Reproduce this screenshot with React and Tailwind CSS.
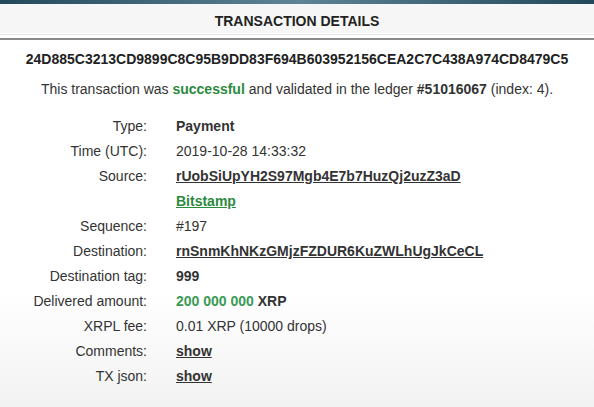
export default function App() {
  const rows = [
    { label: "Type:", value: <span className="font-bold">Payment</span> },
    { label: "Time (UTC):", value: <span>2019-10-28 14:33:32</span> },
    { label: "Source:", value: <a className="font-bold underline text-[#333]">rUobSiUpYH2S97Mgb4E7b7HuzQj2uzZ3aD</a> },
    { label: "", value: <a className="font-bold underline text-[#2b8a3e]">Bitstamp</a> },
    { label: "Sequence:", value: <span>#197</span> },
    { label: "Destination:", value: <a className="font-bold underline text-[#333]">rnSnmKhNKzGMjzFZDUR6KuZWLhUgJkCeCL</a> },
    { label: "Destination tag:", value: <span className="font-bold">999</span> },
    { label: "Delivered amount:", value: <span className="font-bold"><span className="text-[#3a9a55]">200 000 000</span> XRP</span> },
    { label: "XRPL fee:", value: <span>0.01 XRP (10000 drops)</span> },
    { label: "Comments:", value: <a className="font-bold underline text-[#333]">show</a> },
    { label: "TX json:", value: <a className="font-bold underline text-[#333]">show</a> },
  ];
  return (
    <div className="w-[594px] h-[407px] overflow-hidden text-[14px] text-[#333] bg-gradient-to-b from-white from-[72%] to-[#f2f2f2]" style={{ fontFamily: '"Liberation Sans", Arial, sans-serif' }}>
      <div className="h-[4px] bg-gradient-to-r from-[#23495a] via-[#5d8494] to-[#22495a]" />
      <div className="h-[29px] pt-[5px] bg-[#f6f6f6] flex items-center justify-center font-bold text-[14px] text-[#222]">
        TRANSACTION DETAILS
      </div>
      <div className="h-[1px] bg-white" />
      <div className="h-[1px] bg-[#e6e6e6]" />
      <div className="h-[3px] bg-white" />
      <div className="h-[2px] bg-[#8a8a8a]" />
      <div className="pt-[11px] text-center font-bold text-[#222] leading-[16px] text-[14px]">
        24D885C3213CD9899C8C95B9DD83F694B603952156CEA2C7C438A974CD8479C5
      </div>
      <div className="pt-[14px] text-center leading-[16px]">
        This transaction was <span className="font-bold text-[#2b8a3e]">successful</span> and validated in the ledger <span className="font-bold">#51016067</span> (index: 4).
      </div>
      <div className="pt-[17px] flex flex-col">
        {rows.map((r, i) => (
          <div key={i} className="flex h-[25px] items-center">
            <div className="w-[147px] text-right shrink-0">{r.label}</div>
            <div className="pl-[29px]">{r.value}</div>
          </div>
        ))}
      </div>
    </div>
  );
}
